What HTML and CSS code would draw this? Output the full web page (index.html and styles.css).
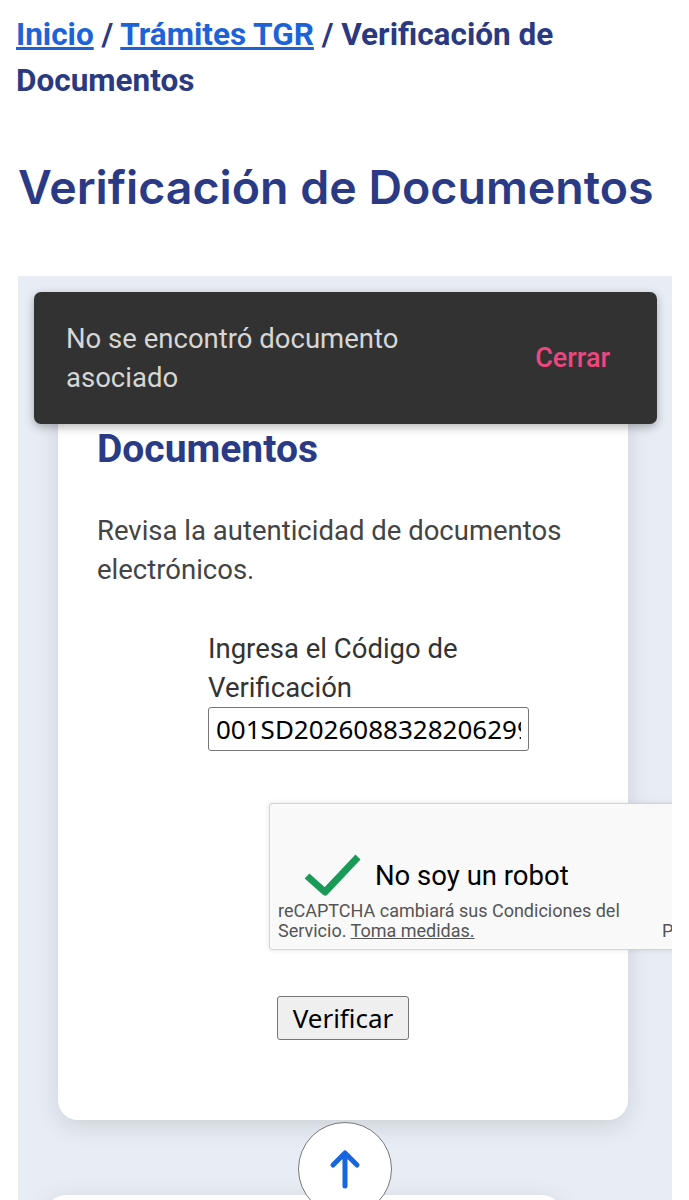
FILE: index.html
```html
<!DOCTYPE html>
<html lang="es">
<head>
    <meta charset="UTF-8">
    <meta name="viewport" content="width=device-width, initial-scale=1.0">
    <title>Verificación de Documentos</title>
    <link rel="stylesheet" href="styles.css">
</head>
<body>
    <nav class="breadcrumb">
        <a href="#">Inicio</a> / <a href="#">Trámites TGR</a> / Verificación de Documentos
    </nav>

    <h1 class="page-title">Verificación de Documentos</h1>

    <section class="panel">
        <div class="toast">
            <span class="toast-text">No se encontró documento asociado</span>
            <button class="toast-close">Cerrar</button>
        </div>

        <div class="card">
            <h2 class="card-title">Verificación de Documentos</h2>
            <p class="card-text">Revisa la autenticidad de documentos electrónicos.</p>

            <div class="code-field">
                <label for="codigo">Ingresa el Código de Verificación</label>
                <input type="text" id="codigo" value="001SD2026088328206299">
            </div>

            <div class="captcha">
                <div class="captcha-check">
                    <svg width="60" height="46" viewBox="0 0 60 46">
                        <path d="M4 24 L22 40 L55 5" fill="none" stroke="#1a9a58" stroke-width="7" stroke-linejoin="round"/>
                    </svg>
                    <span>No soy un robot</span>
                </div>
                <div class="captcha-footer">
                    <span class="captcha-note">reCAPTCHA cambiará sus Condiciones del Servicio. <a href="#">Toma medidas.</a></span>
                    <span class="captcha-links">Privacidad - Condiciones</span>
                </div>
            </div>

            <div class="actions">
                <button class="verify-btn">Verificar</button>
            </div>
        </div>

        <button class="to-top" aria-label="Volver arriba">
            <svg width="32" height="40" viewBox="0 0 32 40">
                <path d="M16 37 V5 M4 16 L16 4 L28 16" fill="none" stroke="#1766e0" stroke-width="5" stroke-linecap="round" stroke-linejoin="round"/>
            </svg>
        </button>

        <div class="card card-next"></div>
    </section>
</body>
</html>
```

FILE: styles.css
```css
body {
    margin: 0;
    padding: 0;
    font-family: 'Roboto', 'Noto Sans', sans-serif;
    background-color: #ffffff;
    color: #333;
}

.breadcrumb {
    padding: 12px 16px 0;
    font-size: 31.5px;
    line-height: 46px;
    font-weight: 700;
    color: #2b3a80;
}

.breadcrumb a {
    color: #1d63d8;
    text-decoration: underline;
}

.page-title {
    margin: 53px 0 0 18px;
    font-family: 'Inter', 'Lato', sans-serif;
    font-size: 46.5px;
    line-height: 60px;
    font-weight: 600;
    white-space: nowrap;
    color: #2b3a85;
}

.panel {
    position: relative;
    margin: 59px 17px 0 18px;
    padding-top: 40px;
    height: 1000px;
    background-color: #e8edf5;
    overflow: hidden;
}

/* snackbar over the card */
.toast {
    position: absolute;
    top: 16px;
    left: 16px;
    right: 15px;
    height: 132px;
    padding: 0 47px 0 32px;
    box-sizing: border-box;
    display: flex;
    justify-content: space-between;
    align-items: center;
    background-color: #323232;
    border-radius: 7px;
    box-shadow: 0px 3px 10px rgba(0, 0, 0, 0.3);
    z-index: 2;
}

.toast-text {
    max-width: 400px;
    font-size: 27.5px;
    line-height: 39px;
    color: #d6d6d6;
}

.toast-close {
    border: none;
    background: none;
    padding: 0;
    font-family: inherit;
    font-size: 27px;
    font-weight: 500;
    color: #ef4680;
    cursor: pointer;
}

.card {
    margin: 0 44px 0 40px;
    padding: 64px 39px 80px;
    background: #ffffff;
    border-radius: 20px;
    box-shadow: 0px 6px 24px rgba(0, 0, 0, 0.12);
}

.card-title {
    max-width: 420px;
    margin: 0;
    font-size: 39px;
    line-height: 46px;
    font-weight: 700;
    color: #2b3a85;
}

.card-text {
    margin: 39px 0 0;
    font-size: 27.5px;
    line-height: 39px;
    color: #444;
}

.code-field {
    margin: 40px 0 0 111px;
    width: 321px;
}

.code-field label {
    display: block;
    font-size: 27.5px;
    line-height: 39px;
    color: #333;
}

.code-field input {
    width: 321px;
    height: 44px;
    box-sizing: border-box;
    padding: 0 7px;
    border: 1px solid #767676;
    border-radius: 3px;
    font-family: 'Noto Sans', sans-serif;
    font-size: 26px;
    color: #000;
}

.captcha {
    margin: 52px 0 0 172px;
    width: 430px;
    height: 147px;
    box-sizing: border-box;
    padding: 48px 0 0 8px;
    background-color: #f9f9f9;
    border: 1px solid #d3d3d3;
    border-radius: 3px;
    box-shadow: 0px 0px 4px 1px rgba(0, 0, 0, 0.08);
}

.captcha-check {
    display: flex;
    align-items: center;
    gap: 12px;
    padding-left: 25px;
    font-size: 27.5px;
    color: #000;
}

.captcha-footer {
    display: flex;
    align-items: flex-end;
    gap: 20px;
    margin-top: 3px;
}

.captcha-note {
    width: 364px;
    flex-shrink: 0;
    font-size: 18px;
    line-height: 20px;
    color: #555;
}

.captcha-note a {
    color: #555;
    text-decoration: underline;
}

.captcha-links {
    white-space: nowrap;
    font-size: 18px;
    line-height: 20px;
    color: #555;
}

.actions {
    margin-top: 46px;
    text-align: center;
}

.verify-btn {
    height: 44px;
    padding: 0 15px;
    border: 1px solid #767676;
    border-radius: 3px;
    background-color: #efefef;
    font-family: 'Noto Sans', sans-serif;
    font-size: 26px;
    color: #000;
}

.to-top {
    position: relative;
    z-index: 1;
    display: flex;
    justify-content: center;
    align-items: center;
    margin: 2px auto 0;
    width: 94px;
    height: 94px;
    padding: 0;
    border: 1px solid #777;
    border-radius: 50%;
    background: #ffffff;
}

.card-next {
    margin: -21px 110px 0 28px;
    padding: 0;
    height: 200px;
}
```
